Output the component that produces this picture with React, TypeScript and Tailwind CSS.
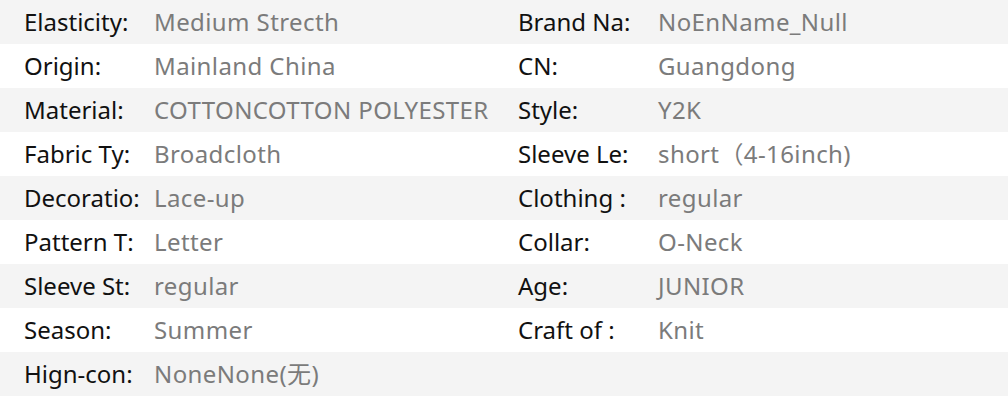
import React from "react";

const rows: [string, string, string, string][] = [
  ["Elasticity:", "Medium Strecth", "Brand Na:", "NoEnName_Null"],
  ["Origin:", "Mainland China", "CN:", "Guangdong"],
  ["Material:", "COTTONCOTTON POLYESTER", "Style:", "Y2K"],
  ["Fabric Ty:", "Broadcloth", "Sleeve Le:", "short（4-16inch)"],
  ["Decoratio:", "Lace-up", "Clothing :", "regular"],
  ["Pattern T:", "Letter", "Collar:", "O-Neck"],
  ["Sleeve St:", "regular", "Age:", "JUNIOR"],
  ["Season:", "Summer", "Craft of :", "Knit"],
  ["Hign-con:", "NoneNone(无)", "", ""],
];

export default function App() {
  return (
    <div
      className="w-[1008px] h-[396px] bg-white text-[24px] leading-none"
      style={{ fontFamily: '"Noto Sans", "Noto Sans CJK SC", sans-serif' }}
    >
      {rows.map((r, i) => (
        <div
          key={i}
          className={`flex h-[44px] items-center pl-[24px] ${i % 2 === 0 ? "bg-[#f4f4f4]" : "bg-white"}`}
        >
          <div className="flex w-[494px] items-center">
            <span className="w-[130px] shrink-0 text-[#111111] whitespace-nowrap">{r[0]}</span>
            <span className="text-[#7b7b7b] whitespace-nowrap tracking-[0.4px]">{r[1]}</span>
          </div>
          <div className="flex items-center">
            <span className="w-[140px] shrink-0 text-[#111111] whitespace-nowrap">{r[2]}</span>
            <span className="text-[#7b7b7b] whitespace-nowrap tracking-[0.4px]">{r[3]}</span>
          </div>
        </div>
      ))}
    </div>
  );
}
